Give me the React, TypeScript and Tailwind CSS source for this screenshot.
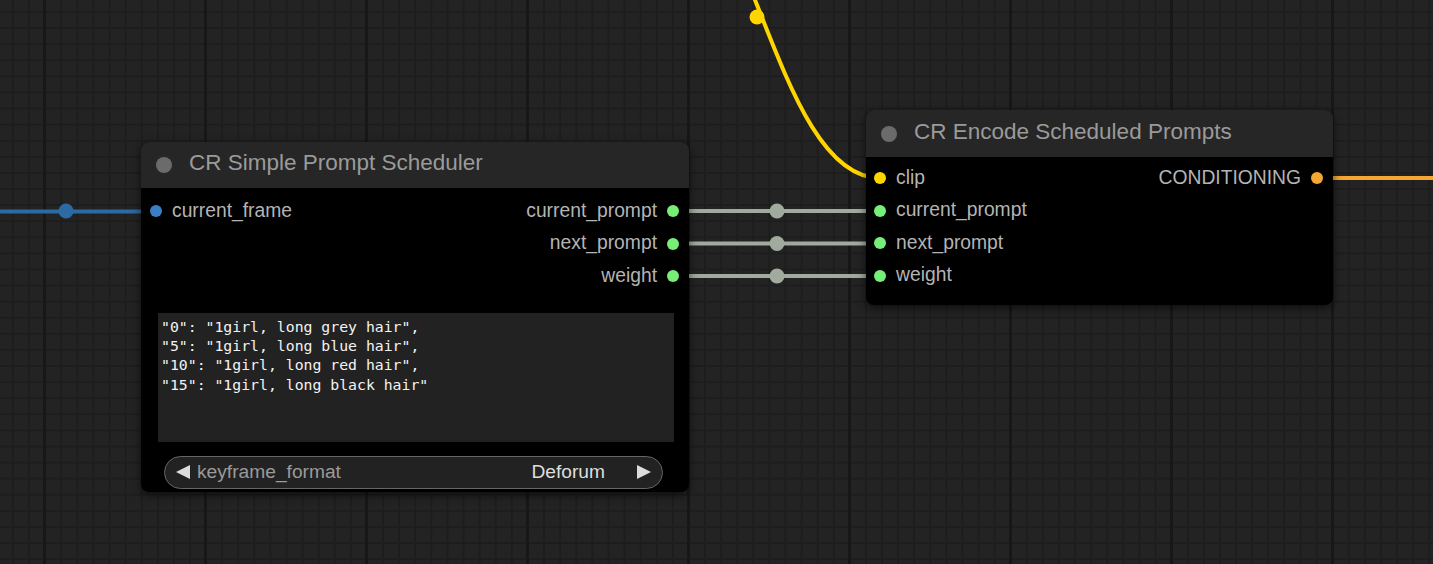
const sans = "font-['Liberation_Sans',Arial,sans-serif]";
const mono = "font-['DejaVu_Sans_Mono','Liberation_Mono',monospace]";

const GREEN = "#77ee77";

function Dot({ color }: { color: string }) {
  return <span className="inline-block w-[12px] h-[12px] rounded-full shrink-0" style={{ backgroundColor: color }} />;
}

function InSlot({ label, color }: { label: string; color: string }) {
  return (
    <div className="flex items-center h-[32.5px]">
      <Dot color={color} />
      <span className="ml-[10px] text-[19.3px] text-[#b4b4b4]">{label}</span>
    </div>
  );
}

function OutSlot({ label, color }: { label: string; color: string }) {
  return (
    <div className="flex items-center justify-end h-[32.5px]">
      <span className="mr-[10px] text-[19.3px] text-[#b4b4b4]">{label}</span>
      <Dot color={color} />
    </div>
  );
}

function NodeTitle({ title, h }: { title: string; h: string }) {
  return (
    <div className={`flex items-center ${h} bg-[#262626] rounded-t-[8px] pl-[15px]`}>
      <span className="w-[16px] h-[16px] rounded-full bg-[#6b6b6b]" />
      <span className="ml-[17px] text-[22.5px] text-[#9a9a9a] leading-none -mt-[3px]">{title}</span>
    </div>
  );
}

const prompts = [
  '"0": "1girl, long grey hair",',
  '"5": "1girl, long blue hair",',
  '"10": "1girl, long red hair",',
  '"15": "1girl, long black hair"',
];

export default function App() {
  return (
    <div className={`relative w-[1433px] h-[564px] overflow-hidden bg-[#232323] ${sans}`}>
      {/* grid */}
      <div className="absolute inset-0 [background-image:linear-gradient(to_right,#1d1d1d_2px,transparent_2px),linear-gradient(to_bottom,#1d1d1d_2px,transparent_2px)] [background-size:16.1px_16.1px] [background-position:12px_11px]" />
      <div className="absolute inset-0 [background-image:linear-gradient(to_right,#171717_3px,transparent_3px)] [background-size:161px_161px] [background-position:43px_0px]" />

      {/* links */}
      <svg className="absolute inset-0" width="1433" height="564">
        <path d="M0 211.5 L156 211.5" stroke="#2c6aa3" strokeWidth="4" fill="none" />
        <circle cx="66" cy="211" r="7.5" fill="#2c6aa3" />
        {[211, 243.5, 276].map((y) => (
          <g key={y}>
            <path d={`M673 ${y} L880 ${y}`} stroke="#a1ab9d" strokeWidth="4" fill="none" />
            <circle cx="777" cy={y} r="7.5" fill="#a1ab9d" />
          </g>
        ))}
        <path d="M648 -144 C750 -144 772 178 880 178" stroke="#ffd500" strokeWidth="4" fill="none" />
        <circle cx="757" cy="17" r="7.5" fill="#ffd500" />
        <path d="M1317 178 L1433 178" stroke="#f5a733" strokeWidth="4" fill="none" />
      </svg>

      {/* CR Simple Prompt Scheduler */}
      <div className="absolute left-[141px] top-[142px] w-[548px] h-[350px] rounded-[8px] bg-[#000] shadow-[0_3px_10px_rgba(0,0,0,0.6)] flex flex-col">
        <NodeTitle title="CR Simple Prompt Scheduler" h="h-[46px]" />
        <div className="flex justify-between pt-[7px]">
          <div className="pl-[9px]">
            <InSlot label="current_frame" color="#3a7fc4" />
          </div>
          <div className="pr-[10px]">
            <OutSlot label="current_prompt" color={GREEN} />
            <OutSlot label="next_prompt" color={GREEN} />
            <OutSlot label="weight" color={GREEN} />
          </div>
        </div>
        <div className={`mt-[20px] ml-[17px] mr-[15px] h-[129px] bg-[#222] pl-[3px] pt-[4px] text-[14.8px] leading-[19.4px] text-[#f2f2f2] ${mono}`}>
          {prompts.map((p) => (
            <div key={p} className="whitespace-pre">{p}</div>
          ))}
        </div>
        <div className="mt-[14px] ml-[23px] mr-[26px] h-[33px] rounded-full border border-[#666] bg-[#222] flex items-center pl-[10px] pr-[10px]">
          <svg width="16" height="16" viewBox="0 0 16 16"><polygon points="15,1 15,15 1,8" fill="#dcdcdc" /></svg>
          <span className="ml-[6px] text-[19.2px] text-[#9a9a9a]">keyframe_format</span>
          <span className="ml-auto text-[19.2px] text-[#dedede]">Deforum</span>
          <svg className="ml-[31px]" width="16" height="16" viewBox="0 0 16 16"><polygon points="1,1 1,15 15,8" fill="#dcdcdc" /></svg>
        </div>
      </div>

      {/* CR Encode Scheduled Prompts */}
      <div className="absolute left-[866px] top-[110px] w-[467px] h-[195px] rounded-[8px] bg-[#000] shadow-[0_3px_10px_rgba(0,0,0,0.6)] flex flex-col">
        <NodeTitle title="CR Encode Scheduled Prompts" h="h-[47px]" />
        <div className="flex justify-between pt-[5px]">
          <div className="pl-[8px]">
            <InSlot label="clip" color="#ffd500" />
            <InSlot label="current_prompt" color={GREEN} />
            <InSlot label="next_prompt" color={GREEN} />
            <InSlot label="weight" color={GREEN} />
          </div>
          <div className="pr-[10px]">
            <OutSlot label="CONDITIONING" color="#f5a733" />
          </div>
        </div>
      </div>
    </div>
  );
}
